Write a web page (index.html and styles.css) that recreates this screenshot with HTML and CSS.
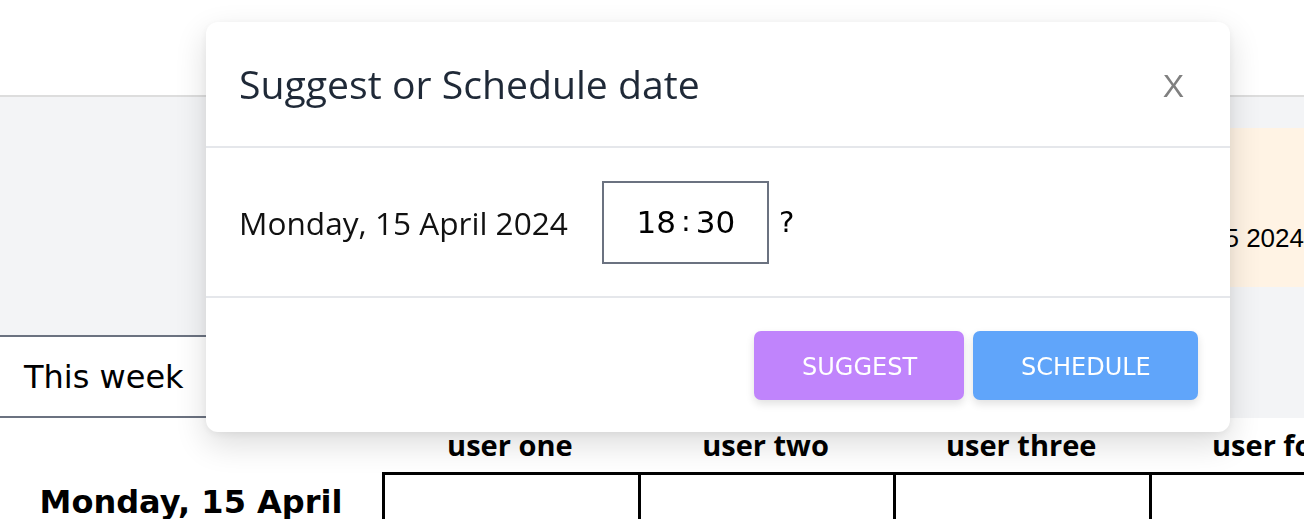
FILE: index.html
```html
<!DOCTYPE html>
<html lang="en">
<head>
<meta charset="utf-8">
<title>Suggest or Schedule date</title>
<link rel="stylesheet" href="styles.css">
</head>
<body>
  <header class="topbar"></header>

  <section class="summary">
    <div class="summary-row">
      <div class="date-card">
        <span class="date-card-text">Mon Apr 15 2024</span>
      </div>
    </div>
    <div class="week-tab">This week</div>
  </section>

  <section class="schedule">
    <div class="sched-grid">
      <div class="head-cell"></div>
      <div class="head-cell">user one</div>
      <div class="head-cell">user two</div>
      <div class="head-cell">user three</div>
      <div class="head-cell head-last">user four</div>

      <div class="row-label">Monday, 15 April</div>
      <div class="slot"></div>
      <div class="slot"></div>
      <div class="slot"></div>
      <div class="slot"></div>
    </div>
  </section>

  <div class="modal" role="dialog" aria-labelledby="modal-title">
    <div class="modal-header">
      <h2 class="modal-title" id="modal-title">Suggest or Schedule date</h2>
      <button class="modal-close" type="button">X</button>
    </div>
    <div class="modal-body">
      <span class="modal-date">Monday, 15 April 2024</span>
      <div class="time-box"><span class="t-part">18</span><span class="t-sep">:</span><span class="t-part">30</span></div>
      <span class="question">?</span>
    </div>
    <div class="modal-footer">
      <button class="btn btn-suggest" type="button">SUGGEST</button>
      <button class="btn btn-schedule" type="button">SCHEDULE</button>
    </div>
  </div>
</body>
</html>
```

FILE: styles.css
```css
html, body {
  margin: 0;
  padding: 0;
  overflow: hidden;
  background: #ffffff;
  font-family: "DejaVu Sans", sans-serif;
  color: #000;
}

.topbar {
  height: 95px;
  background: #ffffff;
  border-bottom: 2px solid #dddddd;
  box-shadow: 0 1px 2px rgba(0, 0, 0, 0.06);
}

.summary {
  background: #f3f4f6;
  height: 321px;
  padding-top: 31px;
  box-sizing: border-box;
  display: flex;
  flex-direction: column;
}

.summary-row {
  display: flex;
  justify-content: flex-end;
}

.date-card {
  width: 440px;
  height: 159px;
  margin-right: -16px;
  padding: 95px 16px 0 0;
  box-sizing: border-box;
  background: #fff3e4;
  text-align: right;
  font-family: "Liberation Sans", Arial, sans-serif;
  font-size: 26px;
  line-height: 30px;
  white-space: nowrap;
}

.week-tab {
  margin-top: 48px;
  width: 300px;
  height: 83px;
  box-sizing: border-box;
  border-top: 2px solid #6b7280;
  border-bottom: 2px solid #6b7280;
  background: #ffffff;
  padding-left: 24px;
  display: flex;
  align-items: center;
  font-size: 32px;
}

.schedule {
  background: #ffffff;
}

.sched-grid {
  display: grid;
  grid-template-columns: 382px repeat(4, 255.7px);
}

.head-cell {
  height: 54px;
  display: flex;
  align-items: center;
  justify-content: center;
  font-family: "Open Sans", sans-serif;
  font-weight: 700;
  font-size: 29px;
  white-space: nowrap;
  padding-bottom: 2px;
  box-sizing: border-box;
}

.head-last {
  justify-content: flex-start;
  padding-left: 63px;
}

.row-label {
  padding-top: 11px;
  text-align: center;
  font-weight: 700;
  font-size: 32px;
  white-space: nowrap;
}

.slot {
  height: 110px;
  border-top: 3px solid #000;
  border-left: 3px solid #000;
}

/* Modal */
.modal {
  position: fixed;
  left: 206px;
  top: 22px;
  width: 1024px;
  background: #ffffff;
  border-radius: 12px;
  box-shadow: 0 12px 32px rgba(0, 0, 0, 0.14), 0 2px 8px rgba(0, 0, 0, 0.06);
  overflow: hidden;
}

.modal-header {
  height: 124px;
  border-bottom: 2px solid #e5e7eb;
  display: flex;
  align-items: center;
  justify-content: space-between;
  padding: 0 46px 0 33px;
}

.modal-title {
  margin: 0;
  font-family: "Open Sans", sans-serif;
  font-weight: 400;
  font-size: 39.2px;
  color: #1f2937;
  padding-bottom: 2px;
}

.modal-close {
  border: none;
  background: none;
  padding: 0;
  font-family: "Liberation Sans", Arial, sans-serif;
  font-size: 32px;
  color: #808080;
  line-height: 1;
  margin-top: 4px;
}

.modal-body {
  height: 150px;
  border-bottom: 2px solid #e5e7eb;
  box-sizing: border-box;
  display: flex;
  align-items: center;
  padding: 0 33px;
}

.modal-date {
  font-family: "Open Sans", sans-serif;
  font-size: 31.6px;
  color: #111;
}

.time-box {
  margin-left: 34px;
  width: 167px;
  height: 83px;
  box-sizing: border-box;
  border: 2px solid #6b7280;
  display: flex;
  align-items: center;
  justify-content: center;
  gap: 5px;
  font-size: 31px;
  padding-left: 1px;
}

.t-sep {
  font-size: 29px;
  padding-bottom: 2px;
}

.question {
  margin-left: 10px;
  font-size: 29px;
}

.modal-footer {
  height: 134px;
  display: flex;
  align-items: center;
  justify-content: flex-end;
  gap: 9px;
  padding: 0 32px;
  box-sizing: border-box;
}

.btn {
  height: 69px;
  border: none;
  border-radius: 7px;
  color: #ffffff;
  font-family: "DejaVu Sans", sans-serif;
  font-size: 24px;
  padding: 4px 48px 0;
  box-shadow: 0 4px 8px rgba(0, 0, 0, 0.12);
}

.btn-suggest {
  background: #c084fc;
  width: 210px;
}

.btn-schedule {
  background: #60a5fa;
  width: 225px;
}
```
